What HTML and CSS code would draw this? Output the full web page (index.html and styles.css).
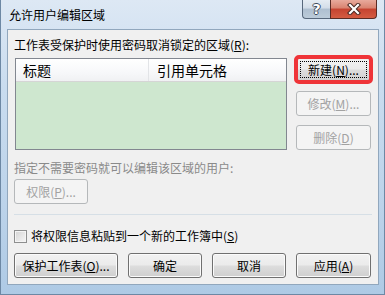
FILE: index.html
```html
<!DOCTYPE html>
<html lang="zh-CN">
<head>
  <meta charset="UTF-8" />
  <title>允许用户编辑区域</title>
  <link rel="stylesheet" href="styles.css">
</head>
<body>

<div class="window">
  <div class="titlebar">
    <span class="title">允许用户编辑区域</span>
    <div class="caption-btns">
      <div class="cap help">?</div>
      <div class="cap close">
        <svg width="14" height="12" viewBox="0 0 14 12">
          <path d="M3 2 L11 10 M11 2 L3 10" stroke="#4a2a24" stroke-width="4.2" stroke-linecap="square" fill="none"/>
          <path d="M3 2 L11 10 M11 2 L3 10" stroke="#fff" stroke-width="2.2" stroke-linecap="square" fill="none"/>
        </svg>
      </div>
    </div>
  </div>

  <div class="client">
    <div class="label">工作表受保护时使用密码取消锁定的区域(<u>R</u>):</div>

    <div class="main-row">
      <div class="list">
        <div class="list-head">
          <div class="col col-title">标题</div>
          <div class="col col-ref">引用单元格</div>
        </div>
        <div class="list-body"></div>
      </div>
      <div class="side-btns">
        <button class="btn default marked"><span class="focus">新建(<u>N</u>)...</span></button>
        <button class="btn" disabled>修改(<u>M</u>)...</button>
        <button class="btn" disabled>删除(<u>D</u>)</button>
      </div>
    </div>

    <div class="label muted">指定不需要密码就可以编辑该区域的用户:</div>
    <button class="btn perm" disabled>权限(<u>P</u>)...</button>

    <div class="sep"></div>

    <div class="check-row">
      <span class="checkbox"></span>
      <span>将权限信息粘贴到一个新的工作簿中(<u>S</u>)</span>
    </div>

    <div class="bottom-btns">
      <button class="btn wide">保护工作表(<u>O</u>)...</button>
      <button class="btn">确定</button>
      <button class="btn">取消</button>
      <button class="btn last">应用(<u>A</u>)</button>
    </div>
  </div>
</div>

</body>
</html>
```

FILE: styles.css
```css
* {
  box-sizing: border-box;
  margin: 0;
  padding: 0;
}

body {
  font-family: "Noto Sans CJK SC", "Noto Sans", sans-serif;
  font-size: 12px;
  color: #000;
  background: #fff;
  overflow: hidden;
}

/* Window frame */
.window {
  width: 385px;
  height: 295px;
  padding: 0 5px 9px 6px;
  border: 1px solid #6d88a4;
  border-top: none;
  background: linear-gradient(to bottom, #dde8f4 0%, #c9dcef 30%, #bcd3ea 70%, #aecae5 100%);
  display: flex;
  flex-direction: column;
}

.titlebar {
  height: 29px;
  display: flex;
  align-items: flex-start;
  padding-right: 2px;
  flex-shrink: 0;
}

.title {
  line-height: 30px;
  padding-left: 2px;
  color: #000;
}

.caption-btns {
  margin-left: auto;
  display: flex;
}

.cap {
  height: 19px;
  border: 1px solid #58687c;
  border-top: none;
  display: flex;
  align-items: center;
  justify-content: center;
}

.help {
  width: 28px;
  border-right: none;
  border-bottom-left-radius: 4px;
  background: linear-gradient(to bottom, #e5ecf3 0%, #d3dde8 45%, #aebfd0 50%, #bccbd9 100%);
  color: #fff;
  font-family: "DejaVu Sans", sans-serif;
  font-weight: bold;
  font-size: 14px;
  text-shadow: -1px 0 #3d4a5a, 1px 0 #3d4a5a, 0 -1px #3d4a5a, 0 1px #3d4a5a;
}

.close {
  width: 47px;
  border-color: #5a2c25;
  border-bottom-right-radius: 4px;
  background: linear-gradient(to bottom, #e8aa9c 0%, #d98370 45%, #c54330 50%, #d45c42 100%);
}

/* Client area */
.client {
  flex: 1;
  background: #f0f0f0;
  border: 1px solid #91a7bd;
  padding: 7px 6px 0 6px;
  display: flex;
  flex-direction: column;
}

.label {
  line-height: 16px;
  white-space: nowrap;
}

.label.muted {
  margin-top: 10px;
  color: #8a8a8a;
}

.main-row {
  display: flex;
  margin-top: 4px;
}

.list {
  width: 272px;
  height: 92px;
  margin-top: 1px;
  margin-left: 1px;
  border: 1px solid #828790;
  background: #cee7cf;
  display: flex;
  flex-direction: column;
}

.list-head {
  height: 23px;
  display: flex;
  background: linear-gradient(to bottom, #ffffff 0%, #f7f8fa 60%, #f0f1f3 100%);
  border-bottom: 1px solid #d5d5d5;
  font-size: 14px;
  line-height: 22px;
}

.col-title {
  width: 133px;
  padding-left: 7px;
  border-right: 1px solid #e2e4e7;
}

.col-ref {
  padding-left: 8px;
}

.side-btns {
  margin-left: 9px;
  display: flex;
  flex-direction: column;
  gap: 9px;
}

/* Buttons */
.btn {
  width: 75px;
  height: 25px;
  font-family: inherit;
  font-size: 12px;
  color: #000;
  border: 1px solid #707070;
  border-radius: 3px;
  background: linear-gradient(to bottom, #f2f2f2 0%, #ebebeb 48%, #dddddd 52%, #cfcfcf 100%);
  box-shadow: inset 0 0 0 1px #fbfbfb;
  display: flex;
  align-items: center;
  justify-content: center;
  white-space: nowrap;
}

.btn:disabled {
  color: #a2a2a2;
  border-color: #b5b8ba;
  background: #f4f4f4;
  box-shadow: none;
}

.btn.default {
  border-color: #3c7fb1;
  box-shadow: inset 0 0 0 1px #8fdcf6;
  padding: 3px;
}

.btn.marked {
  outline: 4px solid #ef3438;
  outline-offset: -2px;
}

.focus {
  flex: 1;
  height: 100%;
  border: 1px dotted #000;
  display: flex;
  align-items: center;
  justify-content: center;
}

.perm {
  width: 74px;
  margin-top: 3px;
}

.sep {
  height: 1px;
  margin-top: 10px;
  background: #d6dfe6;
}

.check-row {
  margin-top: 13px;
  line-height: 16px;
  display: flex;
  align-items: center;
  gap: 4px;
}

.checkbox {
  width: 13px;
  height: 13px;
  border: 1px solid #8e8f8f;
  background: linear-gradient(135deg, #d4d4d4 0%, #f6f6f6 100%);
  box-shadow: inset 0 0 0 1px #f4f4f4;
}

.bottom-btns {
  margin-top: 9px;
  display: flex;
  gap: 10px;
}

.bottom-btns .btn {
  width: 74px;
}

.bottom-btns .btn.wide {
  width: 104px;
}

.bottom-btns .btn.last {
  width: 75px;
}
```
